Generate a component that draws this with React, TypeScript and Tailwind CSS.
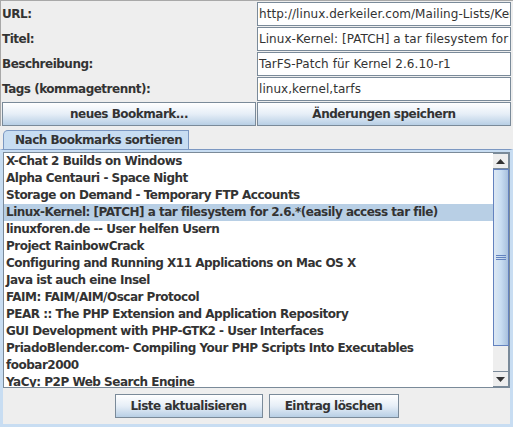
const rows = [
  { label: "URL:", value: "http://linux.derkeiler.com/Mailing-Lists/Kernel/2005-01/1234.html" },
  { label: "Titel:", value: "Linux-Kernel: [PATCH] a tar filesystem for 2.6.*(easily access tar file)" },
  { label: "Beschreibung:", value: "TarFS-Patch für Kernel 2.6.10-r1" },
  { label: "Tags (kommagetrennt):", value: "linux,kernel,tarfs" },
];

const bookmarks = [
  "X-Chat 2 Builds on Windows",
  "Alpha Centauri - Space Night",
  "Storage on Demand - Temporary FTP Accounts",
  "Linux-Kernel: [PATCH] a tar filesystem for 2.6.*(easily access tar file)",
  "linuxforen.de -- User helfen Usern",
  "Project RainbowCrack",
  "Configuring and Running X11 Applications on Mac OS X",
  "Java ist auch eine Insel",
  "FAIM: FAIM/AIM/Oscar Protocol",
  "PEAR :: The PHP Extension and Application Repository",
  "GUI Development with PHP-GTK2 - User Interfaces",
  "PriadoBlender.com- Compiling Your PHP Scripts Into Executables",
  "foobar2000",
  "YaCy: P2P Web Search Engine",
];

const font = { fontFamily: '"DejaVu Sans", "Liberation Sans", sans-serif' };

function MetalButton({ children, className }: { children: React.ReactNode; className?: string }) {
  return (
    <button
      className={
        "h-6 whitespace-nowrap border border-[#7a8a99] bg-gradient-to-b from-[#ffffff] via-[#e6eef7] to-[#b8cfe5] text-[12px] font-bold tracking-[-0.5px] text-[#333333] leading-none " +
        (className ?? "")
      }
    >
      {children}
    </button>
  );
}

function Arrow({ up }: { up?: boolean }) {
  return (
    <div className="flex h-4 items-center justify-center border border-[#7a8a99] border-l-0 bg-[#eeeeee]">
      <svg width="9" height="5" viewBox="0 0 9 5">
        {up ? <path d="M4.5 0 L9 5 L0 5 Z" fill="#333" /> : <path d="M0 0 L9 0 L4.5 5 Z" fill="#333" />}
      </svg>
    </div>
  );
}

export default function App() {
  return (
    <div className="flex h-[427px] w-[513px] flex-col overflow-hidden bg-[#eeeeee] text-[#333333]" style={font}>
      {/* form */}
      <div className="flex flex-col gap-px border-l border-t border-[#a8a8a8] pt-[1px] pr-[2px]">
        {rows.map((r) => (
          <div key={r.label} className="flex h-6">
            <div className="flex w-[256px] items-center pl-[1px] text-[12px] font-bold tracking-[-0.5px]">{r.label}</div>
            <div className="flex min-w-0 flex-1 items-center overflow-hidden whitespace-nowrap border border-[#7a8a99] bg-white pl-[1px] text-[12px] tracking-[0.05px]">
              <span className="whitespace-nowrap">{r.value}</span>
            </div>
          </div>
        ))}
        <div className="flex gap-px pl-[1px]">
          <MetalButton className="w-[254px]">neues Bookmark...</MetalButton>
          <MetalButton className="flex-1">Änderungen speichern</MetalButton>
        </div>
      </div>

      {/* tabs */}
      <div className="mt-[3px] flex h-[20px] items-end pl-[3px]">
        <div className="flex h-[19px] w-[186px] items-center whitespace-nowrap rounded-tl-[5px] border border-b-0 border-[#7c98c2] bg-[#c8ddf2] pl-[11px] text-[12px] font-bold tracking-[-0.5px]">
          Nach Bookmarks sortieren
        </div>
      </div>
      <div className="flex flex-1 flex-col border-[3px] border-t border-[#c8ddf2] border-t-[#7c98c2] bg-[#eeeeee]">
        <div className="flex h-[238px] border-t-[2px] border-[#c8ddf2]">
          <div className="flex flex-1 border border-[#7a8a99]">
            <div className="flex flex-1 flex-col overflow-hidden bg-white">
              {bookmarks.map((b, i) => (
                <div
                  key={b}
                  className={
                    "h-[17px] shrink-0 whitespace-nowrap pl-[2px] text-[12px] font-bold tracking-[-0.5px] leading-[17px] " +
                    (i === 3 ? "bg-[#b8cfe5]" : "")
                  }
                >
                  {b}
                </div>
              ))}
            </div>
            <div className="flex w-4 flex-col bg-[#eeeeee]">
              <Arrow up />
              <div className="flex h-[177px] items-center justify-center border border-[#6382bf] bg-gradient-to-r from-[#dde8f3] via-[#c8ddf2] to-[#a8c0dd]">
                <svg width="10" height="5" viewBox="0 0 10 5">
                  <path d="M0 0.5H10M0 2.5H10M0 4.5H10" stroke="#6382bf" strokeWidth="1" />
                </svg>
              </div>
              <div className="flex-1 border-r border-[#7a8a99]" />
              <Arrow />
            </div>
          </div>
        </div>
        <div className="flex flex-1 items-center justify-center gap-[6px]">
          <MetalButton className="w-[148px]">Liste aktualisieren</MetalButton>
          <MetalButton className="w-[130px]">Eintrag löschen</MetalButton>
        </div>
      </div>
    </div>
  );
}
